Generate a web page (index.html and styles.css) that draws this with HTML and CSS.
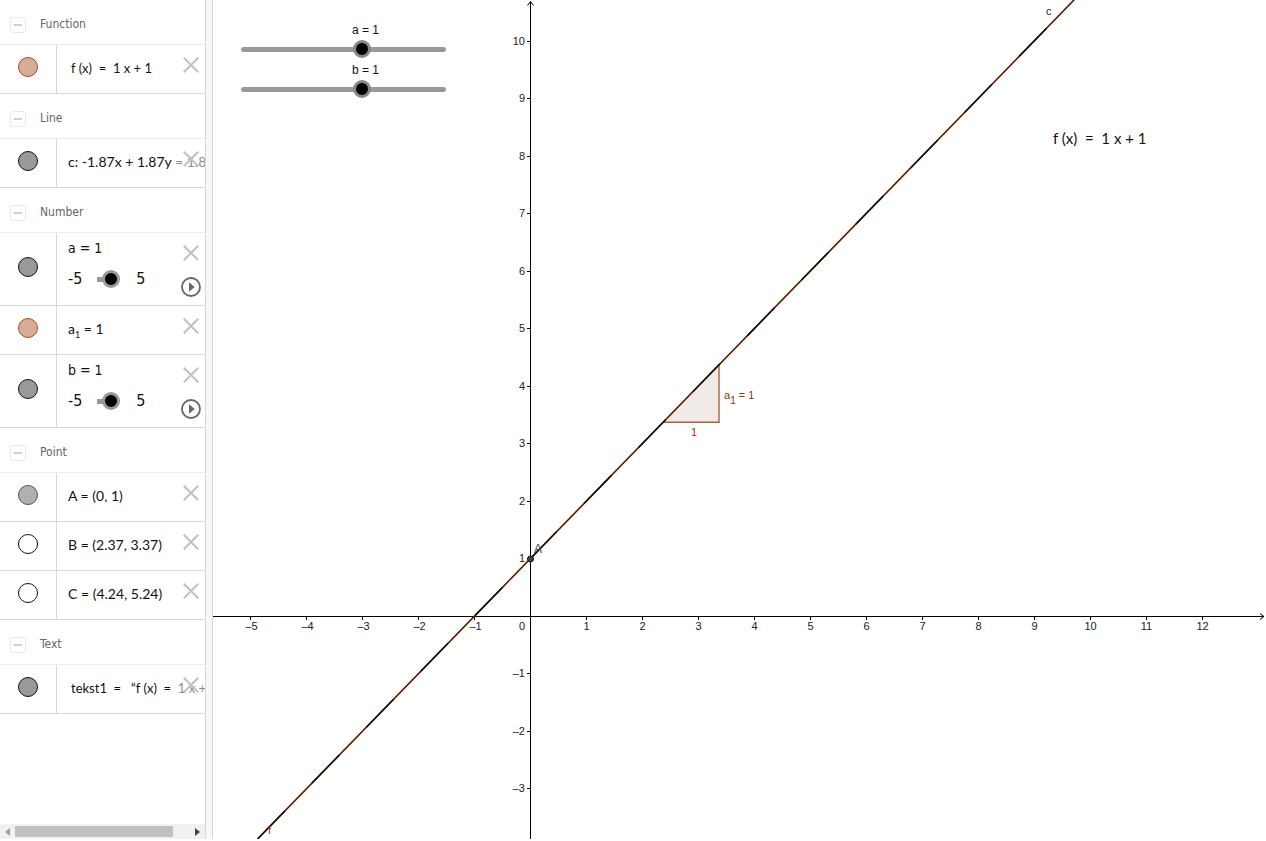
FILE: index.html
```
<!DOCTYPE html>
<html lang="en">
<head>
<meta charset="utf-8">
<title>Linear function</title>
<link rel="stylesheet" href="styles.css">
</head>
<body>
<svg class="defs" aria-hidden="true">
  <symbol id="close" viewBox="0 0 16 16"><path d="M.8.8 15.2 15.2M15.2.8.8 15.2" fill="none" stroke="#c1c1c1" stroke-width="2"/></symbol>
  <symbol id="play" viewBox="0 0 20 20"><circle cx="10" cy="10" r="9" fill="#fff" stroke="#666" stroke-width="1.8"/><path d="M8 5.3 13.7 10 8 14.7z" fill="#666"/></symbol>
</svg>
<div class="app">
  <aside class="algebra">
    <div class="list">
      <section>
        <header class="group"><button class="fold" aria-label="Collapse Function"></button><h2>Function</h2></header>
        <div class="row">
          <div class="mark"><button class="dot brown" aria-label="Show f"></button></div>
          <div class="body"><span class="expr tex">f (x) &nbsp;= &nbsp;1 x + 1</span></div>
          <div class="tools"><button class="icon" aria-label="Delete f"><svg class="x"><use href="#close"/></svg></button></div>
        </div>
      </section>
      <section>
        <header class="group"><button class="fold" aria-label="Collapse Line"></button><h2>Line</h2></header>
        <div class="row">
          <div class="mark"><button class="dot gray" aria-label="Show c"></button></div>
          <div class="body"><span class="expr">c: -1.87x + 1.87y = 1.87</span></div>
          <div class="tools"><button class="icon" aria-label="Delete c"><svg class="x"><use href="#close"/></svg></button></div>
        </div>
      </section>
      <section>
        <header class="group"><button class="fold" aria-label="Collapse Number"></button><h2>Number</h2></header>
        <div class="row tall">
          <div class="mark"><button class="dot gray" aria-label="Show a"></button></div>
          <div class="body">
            <label class="name" for="mini-a">a = 1</label>
            <div class="mini"><span>-5</span><input id="mini-a" type="range" min="-5" max="5" value="1"><span>5</span></div>
          </div>
          <div class="tools"><button class="icon" aria-label="Delete a"><svg class="x"><use href="#close"/></svg></button><button class="icon" aria-label="Animate a"><svg class="play"><use href="#play"/></svg></button></div>
        </div>
        <div class="row">
          <div class="mark"><button class="dot brown" aria-label="Show a1"></button></div>
          <div class="body"><span class="expr">a<sub>1</sub> = 1</span></div>
          <div class="tools"><button class="icon" aria-label="Delete a1"><svg class="x"><use href="#close"/></svg></button></div>
        </div>
        <div class="row tall">
          <div class="mark"><button class="dot gray" aria-label="Show b"></button></div>
          <div class="body">
            <label class="name" for="mini-b">b = 1</label>
            <div class="mini"><span>-5</span><input id="mini-b" type="range" min="-5" max="5" value="1"><span>5</span></div>
          </div>
          <div class="tools"><button class="icon" aria-label="Delete b"><svg class="x"><use href="#close"/></svg></button><button class="icon" aria-label="Animate b"><svg class="play"><use href="#play"/></svg></button></div>
        </div>
      </section>
      <section>
        <header class="group"><button class="fold" aria-label="Collapse Point"></button><h2>Point</h2></header>
        <div class="row">
          <div class="mark"><button class="dot light" aria-label="Show A"></button></div>
          <div class="body"><span class="expr">A = (0, 1)</span></div>
          <div class="tools"><button class="icon" aria-label="Delete A"><svg class="x"><use href="#close"/></svg></button></div>
        </div>
        <div class="row">
          <div class="mark"><button class="dot" aria-label="Show B"></button></div>
          <div class="body"><span class="expr">B = (2.37, 3.37)</span></div>
          <div class="tools"><button class="icon" aria-label="Delete B"><svg class="x"><use href="#close"/></svg></button></div>
        </div>
        <div class="row">
          <div class="mark"><button class="dot" aria-label="Show C"></button></div>
          <div class="body"><span class="expr">C = (4.24, 5.24)</span></div>
          <div class="tools"><button class="icon" aria-label="Delete C"><svg class="x"><use href="#close"/></svg></button></div>
        </div>
      </section>
      <section>
        <header class="group"><button class="fold" aria-label="Collapse Text"></button><h2>Text</h2></header>
        <div class="row">
          <div class="mark"><button class="dot gray" aria-label="Show text"></button></div>
          <div class="body"><span class="expr tex">tekst1 &nbsp;= &nbsp;&nbsp;“f (x) &nbsp;= &nbsp;1 x + 1”</span></div>
          <div class="tools"><button class="icon" aria-label="Delete text"><svg class="x"><use href="#close"/></svg></button></div>
        </div>
      </section>
    </div>
    <div class="scroll">
      <button class="arrow" aria-label="Scroll left"><svg width="5" height="8"><path d="M5 0v8L0 4z" fill="#a0a0a0"/></svg></button>
      <div class="track"><div class="thumb"></div></div>
      <button class="arrow" aria-label="Scroll right"><svg width="5" height="8"><path d="M0 0v8l5-4z" fill="#404040"/></svg></button>
    </div>
  </aside>
  <div class="splitter"></div>
  <main class="graph">
    <svg class="plot" viewBox="213 0 1053 839" preserveAspectRatio="xMinYMin slice">
      <path d="M663 422.2 719 422.2 719 364.7z" fill="#f0ebe9"/>
      <path d="M663 422.2H719V364.7" fill="none" stroke="#b0603c" stroke-width="1.4"/>
      <path class="axis" d="M213 616.5H1263M1260 613.5l4 3-4 3M530.5 839V2M527.5 5.500l3-4 3 4"/>
      <g id="ticks"></g>
      <path d="M257.600 839 1074 0" stroke="#993300" stroke-width="1.6"/>
      <path d="M257.600 839 1074 0" stroke="#000" stroke-width="1.1" stroke-opacity=".5"/>
      <path d="M257.600 839 1074 0" stroke="#111" stroke-width="1.5" stroke-dasharray="39 39"/>
      <circle cx="530.5" cy="559" r="3" fill="#444" stroke="#111"/>
      <text class="label point" x="534" y="553">A</text>
      <text class="label" x="1046" y="15">c</text>
      <text class="label brown-text" x="268" y="834">f</text>
      <text class="label brown-text" x="691" y="436">1</text>
      <text class="label brown-text" x="724" y="399">a<tspan class="small" dy="5">1</tspan><tspan dy="-5"> = 1</tspan></text>
      <text class="formula" x="1053" y="144">f (x) &#160;= &#160;1 x + 1</text>
    </svg>
    <div class="sliders">
      <label for="slide-a">a = 1</label><input id="slide-a" type="range" min="-5" max="5" value="1">
      <label for="slide-b">b = 1</label><input id="slide-b" type="range" min="-5" max="5" value="1">
    </div>
  </main>
</div>
<script src="script.js"></script>
</body>
</html>
```
FILE: styles.css
```
* { box-sizing: border-box; }
body { margin: 0; background: #fff; color: #111; font-family: "DejaVu Sans Condensed", "DejaVu Sans", sans-serif; font-stretch: condensed; overflow: hidden; }
button { padding: 0; border: 0; background: none; }
.defs { display: none; }
.app { display: flex; height: calc(100vh - 2px); }
.algebra { flex: 0 0 205px; min-width: 0; display: flex; flex-direction: column; }
.list { flex: 1; min-height: 0; overflow: hidden; }
.group { height: 45px; display: flex; align-items: center; gap: 14px; padding: 5px 0 0 10px; border-bottom: 1px solid #ebebeb; }
.group h2 { margin: 0; padding-bottom: 2px; font-size: 12px; font-weight: 400; color: #666; }
.fold { width: 16px; height: 16px; display: grid; place-items: center; border: 1px solid #ebe8e8; border-radius: 3px; }
.fold::before { content: ""; width: 8px; height: 2px; background: #d0d0d0; }
.row { display: flex; height: 49px; position: relative; overflow: hidden; border-bottom: 1px solid #d7d7d7; }
.row.tall { height: 73px; }
.mark { flex: 0 0 57px; display: grid; place-items: center; padding-bottom: 4px; border-right: 1px solid #d7d7d7; }
.dot { width: 20px; height: 20px; border: 1px solid #111; border-radius: 50%; background: #fff; }
.dot.gray { background: #999; }
.dot.light { background: #b0b0b0; border-color: #555; }
.dot.brown { background: #d6ad99; border-color: #a84c20; }
.body { flex: 1; min-width: 0; padding-left: 11px; white-space: nowrap; overflow: hidden; }
.expr { display: block; line-height: 46px; font-family: Lato, sans-serif; font-size: 14px; font-stretch: normal; }
.expr.tex { padding-left: 3px; font-size: 13px; }
.expr sub { font-size: 9px; line-height: 0; }
.name { display: block; padding-top: 6px; font-size: 14px; line-height: 18px; }
.mini { display: flex; align-items: center; height: 44px; font-size: 16px; line-height: 20px; }
.mini input { width: 25px; margin: 0 14px 0 15px; }
.tools { position: absolute; top: 0; right: 0; width: 30px; height: 100%; display: flex; flex-direction: column; align-items: center; gap: 16px; padding: 12px 0 0 1px; background: rgba(255, 255, 255, .5); }
.icon { display: grid; }
.x { width: 16px; height: 16px; }
.play { width: 20px; height: 20px; }
input[type="range"] { appearance: none; height: 18px; background: none; }
input[type="range"]::-webkit-slider-runnable-track { height: 5px; border-radius: 3px; background: #999; }
input[type="range"]::-webkit-slider-thumb { appearance: none; width: 18px; height: 18px; margin-top: -7px; border: 3px solid #888; border-radius: 50%; background: #000; }
.mini input::-webkit-slider-runnable-track { border-radius: 0; background: linear-gradient(90deg, #999 20px, transparent 20px); }
.mini input::-webkit-slider-thumb { border-color: #999; }
.scroll { height: 15px; display: flex; align-items: center; background: #f1f1f1; }
.arrow { flex: 0 0 15px; display: grid; place-items: center; }
.track { flex: 1; }
.thumb { width: 90%; height: 11px; background: #c1c1c1; }
.splitter { flex: 0 0 8px; background: #f8f8f8; border: solid #d7d7d7; border-width: 0 1px; }
.graph { flex: 1; min-width: 0; position: relative; overflow: hidden; }
.plot { display: block; width: 100%; height: 100%; font-family: "Liberation Sans", Arial, sans-serif; font-stretch: normal; }
.axis { fill: none; stroke: #000; stroke-width: 1; }
.tick { font-size: 11px; fill: #222; }
.xtick { text-anchor: middle; }
.ytick { text-anchor: end; }
.label { font-size: 11px; fill: #222; }
.point { font-size: 12px; fill: #444; }
.brown-text { fill: #993300; }
.small { font-size: 10px; }
.formula { font-family: Lato, sans-serif; font-size: 15px; fill: #111; }
.sliders { position: absolute; left: 28px; top: 23px; width: 205px; display: grid; font: 12px "Liberation Sans", Arial, sans-serif; }
.sliders label { height: 17px; line-height: 15px; padding-left: 111px; }
.sliders input { width: 100%; margin: 0 0 5px; }
```
FILE: script.js
```
const NS = "http://www.w3.org/2000/svg";
const ticks = document.getElementById("ticks");
const origin = { x: 530.5, y: 616.5 };
const unit = { x: 56, y: 57.5 };

function add(name, attrs, text) {
  const el = document.createElementNS(NS, name);
  for (const key in attrs) el.setAttribute(key, attrs[key]);
  if (text !== undefined) el.textContent = text;
  ticks.appendChild(el);
}

const show = n => (n < 0 ? "–" + -n : String(n));

for (let n = -5; n <= 12; n++) {
  const x = Math.floor(origin.x + n * unit.x) + 0.5;
  if (n === 0) {
    add("text", { class: "tick ytick", x: 525, y: 630 }, "0");
    continue;
  }
  add("path", { class: "axis", d: `M${x} 617V620` });
  add("text", { class: "tick xtick", x: x + (n < 0 ? 1 : 0), y: 630 }, show(n));
}

for (let n = -3; n <= 10; n++) {
  if (n === 0) continue;
  const y = Math.ceil(origin.y - n * unit.y) - 0.5;
  add("path", { class: "axis", d: `M527 ${y}H530` });
  add("text", { class: "tick ytick", x: 525, y: Math.floor(y) + 4 }, show(n));
}
```
